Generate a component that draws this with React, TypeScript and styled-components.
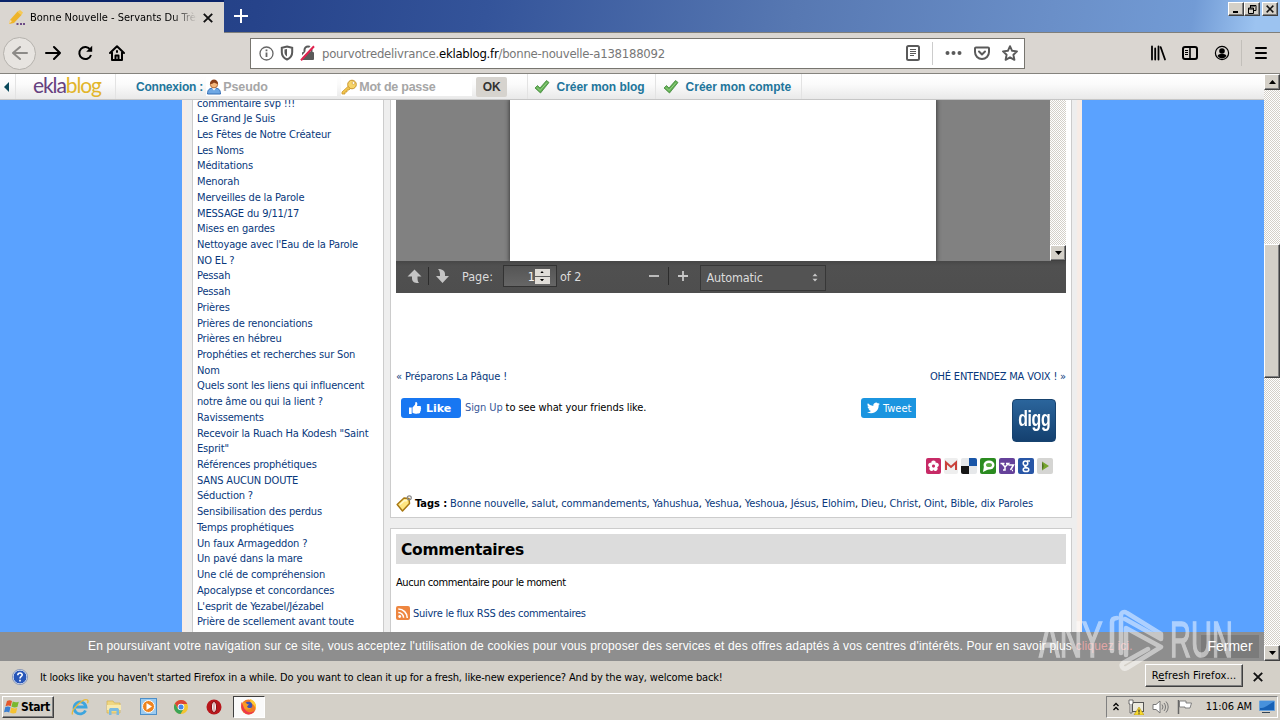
import React from 'react';
import styled, { createGlobalStyle, css } from 'styled-components';

const GlobalStyle = createGlobalStyle`
  * {
    box-sizing: border-box;
  }

  body {
    margin: 0;
    overflow: hidden;
    background: #d4d0c8;
  }
`;

const tahoma = css`
  font-family: 'DejaVu Sans Condensed', 'DejaVu Sans', sans-serif;
  font-stretch: condensed;
`;

const arial = css`
  font-family: 'Liberation Sans', Arial, sans-serif;
`;

const raised = css`
  background: #d4d0c8;
  border: 1px solid;
  border-color: #fff #404040 #404040 #fff;
  box-shadow: inset -1px -1px 0 #808080;
`;

const Screen = styled.div`
  ${tahoma}
  width: 1280px;
  height: 720px;
  display: flex;
  flex-direction: column;
  overflow: hidden;
  font-size: 11px;
  color: #000;
`;

const Text = styled.span<{ $spacing?: number }>`
  white-space: pre;
  letter-spacing: ${({ $spacing }) => $spacing ?? 0}px;
`;

/* ---------- window chrome ---------- */

const TitleBar = styled.div`
  height: 33px;
  flex: none;
  display: flex;
  border-bottom: 1px solid #7f7f7b;
  background: linear-gradient(100deg, #1c3a7c 0%, #26438a 20%, #34549a 38%, #5778b2 62%, #6a8fc8 82%, #729bd5 93%, #9cc3f0 98%);
`;

const Tab = styled.div`
  width: 224px;
  height: 33px;
  border-top: 2px solid #0a246a;
  padding: 0 11px 0 9px;
  display: flex;
  align-items: center;
  background: #dad6d1;
`;

const TabTitle = styled.div`
  width: 167px;
  margin: 0 6px 0 5px;
  overflow: hidden;
  white-space: nowrap;
  mask-image: linear-gradient(90deg, #000 142px, transparent 167px);
`;

const NewTab = styled.div`
  flex: 1;
  padding: 8px 0 0 9px;
`;

const WindowButtons = styled.div`
  display: flex;
  padding: 2px 2px 0 0;
`;

const WindowButton = styled.div<{ $gap?: boolean }>`
  ${raised}
  width: 16px;
  height: 14px;
  margin-left: ${({ $gap }) => ($gap ? 2 : 0)}px;
  display: flex;
  align-items: center;
  justify-content: center;
`;

const NavBar = styled.div`
  height: 41px;
  flex: none;
  display: flex;
  align-items: center;
  padding: 0 13px 0 3px;
  border-bottom: 1px solid #85837e;
  background: #dad6d1;
`;

const BackButton = styled.div`
  width: 33px;
  height: 33px;
  border: 1px solid #b5b2ad;
  border-radius: 50%;
  background: #e7e4e0;
  display: flex;
  align-items: center;
  justify-content: center;
`;

const NavIcons = styled.div`
  display: flex;
  width: 214px;
  padding-left: 9px;
  gap: 16px;
`;

const UrlBar = styled.div`
  width: 775px;
  height: 31px;
  border: 1px solid #77756f;
  background: #fff;
  display: flex;
  align-items: center;
  padding: 0 6px 0 8px;
`;

const UrlText = styled.div`
  flex: 1;
  margin-left: 6px;
  font-size: 13px;
  letter-spacing: -0.25px;
  color: #777;

  b {
    font-weight: normal;
    color: #000;
  }
`;

const Divider = styled.div<{ $h: number; $color: string }>`
  width: 1px;
  height: ${({ $h }) => $h}px;
  background: ${({ $color }) => $color};
`;

const MenuDivider = styled(Divider)`
  margin: 0 -3px 0 -5px;
`;

const UrlActions = styled.div`
  display: flex;
  align-items: center;
  gap: 12px;
`;

const ToolbarRight = styled.div`
  flex: 1;
  display: flex;
  align-items: center;
  justify-content: flex-end;
  gap: 16px;
`;

/* ---------- page ---------- */

const Viewport = styled.div`
  position: relative;
  height: 587px;
  flex: none;
  display: flex;
`;

const Page = styled.div`
  width: 1264px;
  display: flex;
  flex-direction: column;
  background: #5aa2ff;
  overflow: hidden;
`;

const EklaBar = styled.div`
  ${arial}
  height: 26px;
  flex: none;
  display: flex;
  align-items: center;
  font-size: 12px;
  font-weight: bold;
  color: #21759b;
  border-bottom: 1px solid #c6c6c6;
  background: linear-gradient(#fff, #fbfbfb 40%, #e9e9e9);
`;

const EklaCell = styled.div<{ $w: number; $pad?: number }>`
  width: ${({ $w }) => $w}px;
  height: 25px;
  padding-left: ${({ $pad }) => $pad ?? 0}px;
  display: flex;
  align-items: center;
  border-right: 1px solid #e3e3e3;
`;

const Logo = styled.div`
  font-family: Lato, sans-serif;
  font-weight: 400;
  font-size: 21px;
  line-height: 22px;
  letter-spacing: -1.1px;
  margin-top: -3px;
  color: #66407f;

  span {
    color: #e2b52a;
  }
`;

const LoginField = styled.div<{ $w: number }>`
  width: ${({ $w }) => $w}px;
  height: 19px;
  margin-right: 4px;
  display: flex;
  align-items: center;
  gap: 1px;
  font-size: 12.5px;
  color: #a6a6a6;
  background: #fff;
`;

const OkButton = styled.div`
  width: 31px;
  height: 20px;
  border-radius: 2px;
  background: #d6d3ce;
  color: #333;
  font-size: 12px;
  line-height: 21px;
  text-align: center;
`;

const Wrapper = styled.div`
  width: 900px;
  height: 561px;
  margin: 0 auto;
  padding: 0 10px;
  display: flex;
  gap: 6px;
  background: linear-gradient(90deg, #f7ece6 0, #f7ece6 3px, #eeeeee 5px, #eeeeee 894px, #f7ece6 896px);
`;

const Sidebar = styled.div`
  width: 192px;
  padding-left: 4px;
  overflow: hidden;
  background: #fff;
  border: solid #ccc;
  border-width: 0 1px;
`;

const SidebarList = styled.div`
  margin-top: -4.5px;
`;

const SidebarLink = styled.div`
  height: 15.72px;
  line-height: 15.72px;
  white-space: nowrap;
  color: #08387c;
  letter-spacing: -0.16px;
`;

const Column = styled.div`
  width: 682px;
  display: flex;
  flex-direction: column;
  gap: 10px;
`;

const Panel = styled.div<{ $h: number; $first?: boolean }>`
  height: ${({ $h }) => $h}px;
  flex: none;
  padding: ${({ $first }) => ($first ? 0 : 5)}px 5px 0;
  border: 1px solid #ccc;
  border-top-width: ${({ $first }) => ($first ? 0 : 1)}px;
  background: #fff;
`;

const PdfView = styled.div`
  height: 161px;
  display: flex;
  justify-content: flex-end;
  background: #818181;
`;

const PdfSheet = styled.div`
  width: 426px;
  margin-right: 114px;
  background: #fff;
  box-shadow: 0 0 4px 1px rgba(0, 0, 0, 0.5);
  clip-path: inset(0 -6px);
`;

const PdfBar = styled.div`
  height: 32px;
  padding: 0 12px 2px 11px;
  display: flex;
  align-items: center;
  font-size: 12.5px;
  color: #dcdcdc;
  background: linear-gradient(#474747, #505050 5px, #4e4e4e);
`;

const PageInput = styled.div`
  width: 54px;
  height: 22px;
  margin: 0 3px 0 10px;
  padding-right: 6px;
  display: flex;
  align-items: center;
  justify-content: flex-end;
  border: 1px solid #333;
  background: linear-gradient(#555, #666);
  color: #f2f2f2;
`;

const Spinner = styled.div`
  display: flex;
  flex-direction: column;
  gap: 1px;
`;

const SpinnerHalf = styled.div`
  width: 15px;
  height: 7px;
  background: #e0ddd8;
  display: flex;
  align-items: center;
  justify-content: center;
`;

const ZoomSelect = styled.div`
  width: 126px;
  height: 26px;
  margin: 3px 0 0 11px;
  padding: 0 7px 0 6px;
  display: flex;
  align-items: center;
  justify-content: space-between;
  border: 1px solid #373737;
  background: #535353;
`;

const PostNav = styled.div`
  margin-top: 76px;
  height: 15px;
  display: flex;
  justify-content: space-between;
  align-items: center;
  color: #08387c;
`;

const ShareRow = styled.div`
  height: 59px;
  padding: 14px 10px 0 5px;
  display: flex;
  align-items: flex-start;
`;

const LikeButton = styled.div`
  width: 60px;
  height: 20px;
  margin-right: 4px;
  padding-left: 7px;
  border-radius: 3px;
  display: flex;
  align-items: center;
  gap: 4px;
  background: #1877f2;
  color: #fff;
  font-family: 'DejaVu Sans', sans-serif;
  font-stretch: normal;
  font-weight: bold;
`;

const LikeText = styled.div`
  width: 396px;
  line-height: 20px;
  letter-spacing: -0.1px;
  white-space: nowrap;

  span {
    color: #385898;
  }
`;

const TweetButton = styled.div`
  width: 55px;
  height: 20px;
  padding-left: 6px;
  border-radius: 3px 0 0 3px;
  display: flex;
  align-items: center;
  gap: 3px;
  background: #1b95e0;
  color: #fff;
  overflow: hidden;
`;

const Digg = styled.div`
  ${arial}
  width: 44px;
  height: 43px;
  margin: 1px 0 0 96px;
  border-radius: 4px;
  display: flex;
  justify-content: center;
  background: linear-gradient(#2b659c, #14406f);
  border: 1px solid #17436f;
  color: #fff;
  font-size: 22px;
  font-weight: bold;
  line-height: 38px;
`;

const DiggWord = styled.span`
  letter-spacing: -0.5px;
  transform: scaleX(0.72);
`;

const Bookmarks = styled.div`
  height: 16px;
  margin-top: 15px;
  padding-right: 13px;
  display: flex;
  justify-content: flex-end;
  gap: 3px;
`;

const TagRow = styled.div`
  margin-top: 20px;
  height: 18px;
  display: flex;
  align-items: center;
  white-space: nowrap;
`;

const TagLabel = styled.b`
  margin: 0 3px 0 3px;
  letter-spacing: -0.05px;
`;

const Link = styled.span`
  color: #08387c;
`;

const CommentTitle = styled.div`
  height: 30px;
  padding-left: 5px;
  background: #dcdcdc;
  font-family: 'DejaVu Sans', sans-serif;
  font-stretch: normal;
  font-size: 15.5px;
  font-weight: bold;
  line-height: 33px;
  letter-spacing: -0.3px;
`;

const CommentText = styled.div`
  margin: 11px 0 16px;
  height: 15px;
  line-height: 15px;
  letter-spacing: -0.4px;
`;

const RssRow = styled.div`
  display: flex;
  align-items: center;
  gap: 3px;
  letter-spacing: -0.26px;
`;

const CookieBar = styled.div`
  ${arial}
  position: absolute;
  left: 0;
  bottom: 0;
  width: 1264px;
  height: 29px;
  padding: 0 5px 1px 88px;
  display: flex;
  align-items: center;
  justify-content: space-between;
  background: #8e8e8e;
  color: #fff;
  font-size: 12px;

  em {
    font-style: normal;
    color: #e2a6a6;
  }
`;

const CloseCookie = styled.div`
  width: 58px;
  height: 23px;
  background: #7b7b7b;
  font-size: 14px;
  line-height: 23px;
  text-align: center;
`;

const checker = css`
  background: conic-gradient(#fff 25%, #d4d0c8 0 50%, #fff 0 75%, #d4d0c8 0) 0 0 / 2px 2px;
`;

const ScrollTrack = styled.div`
  ${checker}
  width: 16px;
  display: flex;
  flex-direction: column;
`;

const ScrollButton = styled.div`
  ${raised}
  width: 16px;
  height: 16px;
  flex: none;
  display: flex;
  align-items: center;
  justify-content: center;
`;

const ScrollThumb = styled.div`
  ${raised}
  height: 134px;
  margin: 154px 0 auto;
`;

const PdfTrack = styled(ScrollTrack)`
  justify-content: flex-end;
`;

/* ---------- notification and taskbar ---------- */

const Notice = styled.div`
  height: 33px;
  flex: none;
  padding: 0 17px 0 12px;
  display: flex;
  align-items: center;
  background: #d4d0c8;
  border-bottom: 1px solid #fff;
`;

const NoticeText = styled.div`
  flex: 1;
  margin-left: 12px;
  letter-spacing: -0.155px;
`;

const RefreshButton = styled.div`
  ${raised}
  width: 98px;
  height: 23px;
  margin: -3px 10px 0 0;
  line-height: 21px;
  letter-spacing: 0.1px;
  text-align: center;
`;

const Taskbar = styled.div`
  height: 26px;
  padding: 1px 2px 2px;
  display: flex;
  align-items: center;
  background: #d4d0c8;
`;

const StartButton = styled.div`
  ${raised}
  width: 52px;
  height: 22px;
  padding-left: 1px;
  display: flex;
  align-items: center;
  gap: 1px;
  font-weight: bold;
  font-size: 12px;
  letter-spacing: -0.4px;
`;

const QuickLaunch = styled.div`
  flex: 1;
  display: flex;
  align-items: center;
  padding-left: 17px;
  gap: 16.4px;
`;

const ActiveTask = styled.div`
  width: 32px;
  height: 22px;
  margin-left: -5px;
  display: flex;
  align-items: center;
  justify-content: center;
  border: 1px solid;
  border-color: #404040 #fff #fff #404040;
  background: #fafafa;
`;

const Tray = styled.div`
  width: 172px;
  height: 22px;
  padding: 0 2px 0 5px;
  display: flex;
  align-items: center;
  border: 1px solid;
  border-color: #808080 #fff #fff #808080;
`;

const TrayIcons = styled.div`
  flex: 1;
  display: flex;
  align-items: center;
  gap: 8px;
`;

const Watermark = styled.div`
  ${arial}
  position: absolute;
  left: 1039px;
  top: 606px;
  width: 195px;
  height: 68px;
  display: flex;
  align-items: center;
  color: #fff;
  opacity: 0.5;
  font-size: 50px;
  -webkit-text-stroke: 1.5px #fff;
`;

const MarkWord = styled.div<{ $w: number; $scale: number }>`
  width: ${({ $w }) => $w}px;
  line-height: 68px;
  transform: scaleX(${({ $scale }) => $scale});
  transform-origin: left;
  white-space: nowrap;
`;

/* ---------- icons ---------- */

const Arrow = ({ color, flip }: { color: string; flip?: boolean }) => (
  <svg width="16" height="16" viewBox="0 0 16 16" fill="none" stroke={color} strokeWidth="2" strokeLinecap="round" strokeLinejoin="round">
    {flip ? <path d="M15 8H1M8 2L1 8l7 6" /> : <path d="M1 8h14M9 2l6 6-6 6" />}
  </svg>
);

const Cross = ({ size = 10 }: { size?: number }) => (
  <svg width={size} height={size} viewBox="0 0 10 10" stroke="#111" strokeWidth="1.9">
    <path d="M.8.8l8.4 8.4M9.2.8L.8 9.2" />
  </svg>
);

const Triangle = ({ up, size = 7 }: { up?: boolean; size?: number }) => (
  <svg width={size} height={size / 2 + 0.5} viewBox="0 0 7 4">
    <path d={up ? 'M0 4L3.5 0 7 4z' : 'M0 0h7L3.5 4z'} fill="#000" />
  </svg>
);

const Pencil = () => (
  <svg width="16" height="16" viewBox="0 0 16 16">
    <path d="M1 10L8.500 1.500l4 3.500L5 13l-5 1z" fill="#eeb42a" />
    <path d="M8.500 1.500L11 0 14 2.500 12.500 5z" fill="#f5c956" />
    <path d="M0 14l1-4 2 1z" fill="#f4ddb0" />
    <path d="M7.500 13h2v2h-2zM11 13h2v2h-2zM14 13h2v2h-2z" fill="#6d4b86" />
  </svg>
);

const Reload = () => (
  <svg width="16" height="16" viewBox="0 0 16 16" fill="none" stroke="#000" strokeWidth="2">
    <path d="M13.300 4.700A6 6 0 1 0 14 10" />
    <path d="M15.200.8v6H9.200z" fill="#000" stroke="none" />
  </svg>
);

const Home = () => (
  <svg width="16" height="16" viewBox="0 0 16 16" fill="none" stroke="#000" strokeWidth="2" strokeLinejoin="round" strokeLinecap="round">
    <path d="M1 8l7-6.800L15 8M3 7.500V15h10V7.500" />
    <path d="M6.500 15v-4.500h3V15zM8 6v1" />
  </svg>
);

const Info = () => (
  <svg width="15" height="15" viewBox="0 0 15 15" fill="none" stroke="#666">
    <circle cx="7.500" cy="7.500" r="6.500" strokeWidth="1.300" />
    <path d="M7.500 6.500v4.500M7.500 3.500v1.800" strokeWidth="1.800" />
  </svg>
);

const Shield = () => (
  <svg width="14" height="16" viewBox="0 0 14 16">
    <path d="M7 1.500l5.200 1.200v4.500C12.200 11 10 13.200 7 14.500 4 13.200 1.800 11 1.800 7.200V2.700z" fill="none" stroke="#5a5a5a" strokeWidth="2" />
    <path d="M7 4l-2.500.6v2.700c0 2 1 3.400 2.500 4.300z" fill="#5a5a5a" />
  </svg>
);

const BrokenLock = () => (
  <svg width="16" height="16" viewBox="0 0 16 16" fill="none">
    <path d="M4.500 8V5a3.500 3.500 0 0 1 7 0v3" stroke="#5a5a5a" strokeWidth="2" />
    <rect x="2" y="7" width="12" height="8" rx="1" fill="#5a5a5a" />
    <path d="M.5 13.500L12.500 .5" stroke="#fff" strokeWidth="2" />
    <path d="M1 15.200L14 1.200" stroke="#e0224e" strokeWidth="2" />
  </svg>
);

const Reader = () => (
  <svg width="14" height="16" viewBox="0 0 14 16" fill="none" stroke="#5a5a5a">
    <rect x="1" y="1" width="12" height="14" rx="1.500" strokeWidth="2" />
    <path d="M4 4.500h6M4 6.500h6M4 8.500h6M4 10.500h4" />
  </svg>
);

const Dots = () => (
  <svg width="17" height="16" viewBox="0 0 17 16" fill="#5a5a5a">
    <circle cx="2.500" cy="8" r="2" />
    <circle cx="8.500" cy="8" r="2" />
    <circle cx="14.500" cy="8" r="2" />
  </svg>
);

const Pocket = () => (
  <svg width="16" height="15" viewBox="0 0 16 15" fill="none" stroke="#5a5a5a" strokeWidth="2" strokeLinecap="round" strokeLinejoin="round">
    <path d="M2 1.500h12a1 1 0 0 1 1 1V6A7 7 0 0 1 1 6V2.500a1 1 0 0 1 1-1z" />
    <path d="M5 5.500l3 3 3-3" />
  </svg>
);

const Star = () => (
  <svg width="16" height="16" viewBox="0 0 16 16" fill="none" stroke="#5a5a5a" strokeWidth="1.900" strokeLinejoin="round">
    <path d="M8 1.200l2.100 4.600 4.900.6-3.600 3.400 1 5L8 12.300l-4.400 2.500 1-5L1 6.400l4.900-.6z" />
  </svg>
);

const Library = () => (
  <svg width="16" height="16" viewBox="0 0 16 16" stroke="#000" strokeWidth="1.800">
    <path d="M2 1.500v13M5.200 3.500v11M8.500 1.500v13M10.700 2.200l4.300 12.300" strokeLinecap="round" />
  </svg>
);

const SidebarIcon = () => (
  <svg width="16" height="14" viewBox="0 0 16 14" fill="none" stroke="#000">
    <rect x="1" y="1" width="14" height="12" rx="2" strokeWidth="2" />
    <path d="M8 1v12" strokeWidth="1.600" />
    <path d="M3 4.500h3M3 6.500h3M3 8.500h3" />
  </svg>
);

const Account = () => (
  <svg width="16" height="16" viewBox="0 0 16 16">
    <circle cx="8" cy="8" r="6.600" fill="none" stroke="#000" strokeWidth="1.200" />
    <circle cx="8" cy="6" r="2.800" />
    <path d="M3.500 11C4.500 9 6 9 8 9s3.500 0 4.500 2A5.400 5.400 0 0 1 8 13.400 5.400 5.400 0 0 1 3.500 11z" />
  </svg>
);

const Menu = () => (
  <svg width="12" height="14" viewBox="0 0 12 14" stroke="#000" strokeWidth="2" strokeLinecap="round">
    <path d="M1 2h10M1 7h10M1 12h10" />
  </svg>
);

const Check = () => (
  <svg width="16" height="16" viewBox="0 0 16 16">
    <path d="M1 9l2.500-2.500L6 9l6.500-7.500L15 3.500 6.500 14z" fill="#5fae50" stroke="#43883b" strokeWidth=".8" />
    <path d="M3 8.500l3 3 7-8" fill="none" stroke="#9ad38a" />
  </svg>
);

const User = () => (
  <svg width="16" height="16" viewBox="0 0 16 16">
    <path d="M1.500 15c0-4 1.500-6 6.500-6s6.500 2 6.500 6z" fill="#6fa8e4" stroke="#356eb5" />
    <path d="M6 9l2 2.500L10 9z" fill="#fff" />
    <circle cx="8" cy="5.200" r="3.700" fill="#f5b77c" stroke="#a65b25" strokeWidth=".8" />
    <path d="M4 5c0-6 8-6 8 0-2-.3-3-1-4-1.500C7 4.500 5.500 5 4 5z" fill="#8b3f17" />
  </svg>
);

const Key = () => (
  <svg width="17" height="16" viewBox="0 0 17 16">
    <path d="M7.500 7L1 13v2h3v-2h2v-2h2l2-2z" fill="#f3c74f" stroke="#c9942a" strokeWidth=".8" />
    <circle cx="11" cy="5.500" r="4.300" fill="#f7d468" stroke="#c9942a" />
    <circle cx="12.500" cy="4" r="1.400" fill="#fff" stroke="#c9942a" strokeWidth=".6" />
  </svg>
);

const PdfArrow = ({ down }: { down?: boolean }) => (
  <svg width="15" height="15" viewBox="0 0 15 15" fill="#c4c4c4">
    {down ? <path d="M3 0c4 0 7 1.500 7 5v2h4l-6.500 7L1 7h4c0-3 0-5-2-7z" /> : <path d="M7.500.5l7 7h-4c0 3 0 5 1.500 6.500-4 .3-7-1-7-4.500v-2H.5z" />}
  </svg>
);

const SignIcon = ({ plus }: { plus?: boolean }) => (
  <svg width="12" height="12" viewBox="0 0 12 12" stroke="#c8c8c8" strokeWidth="1.800">
    <path d={plus ? 'M1 6h10M6 1v10' : 'M1 6h10'} />
  </svg>
);

const SelectArrows = () => (
  <svg width="6" height="9" viewBox="0 0 6 9" fill="#c8c8c8">
    <path d="M.5 3.200L3 .5l2.500 2.700zM.5 5.800L3 8.500l2.500-2.700z" />
  </svg>
);

const Thumb = () => (
  <svg width="14" height="14" viewBox="0 0 14 14" fill="#fff">
    <path d="M1 6.500h2.700V13H1zM4.500 6.500L7 3.800 7.500 1c1.700-.4 2.300 1.500 1.500 4h3c1 0 1.300 1 .8 1.800.5.700.4 1.500-.1 2 .3.700 0 1.400-.5 1.800.1 1-.4 2-1.600 2-2.800.2-4.300 0-6.100-.9z" />
  </svg>
);

const Bird = () => (
  <svg width="13" height="12" viewBox="0 0 24 20" fill="#fff">
    <path d="M24 2.400a10 10 0 0 1-2.800.8A5 5 0 0 0 23.300.5a10 10 0 0 1-3.100 1.200 4.900 4.900 0 0 0-8.400 4.500A14 14 0 0 1 1.700 1a4.900 4.900 0 0 0 1.500 6.600A5 5 0 0 1 1 7a4.900 4.900 0 0 0 3.900 4.900 5 5 0 0 1-2.200.1 4.900 4.900 0 0 0 4.600 3.400A10 10 0 0 1 0 17.500 14 14 0 0 0 21.500 5z" />
  </svg>
);

const TagIcon = () => (
  <svg width="16" height="17" viewBox="0 0 16 17">
    <path d="M1.200 9.500L8 3l5 .5.500 5L6.500 16z" fill="#ffe680" stroke="#a87812" strokeWidth="1.500" strokeLinejoin="round" />
    <path d="M4 9.500l4.500-4 2.500.2" stroke="#fff8cc" strokeWidth="1.500" fill="none" />
    <circle cx="13.300" cy="2.800" r="2" fill="none" stroke="#888" strokeWidth="1.200" />
  </svg>
);

const Rss = () => (
  <svg width="14" height="14" viewBox="0 0 14 14">
    <rect width="14" height="14" rx="2" fill="#ee8640" />
    <circle cx="3.700" cy="10.500" r="1.400" fill="#fff" />
    <path d="M2.300 6.500a5.300 5.300 0 0 1 5.300 5.300M2.300 3a9 9 0 0 1 9 9" fill="none" stroke="#fff" strokeWidth="1.500" />
  </svg>
);

const Tile = ({ fill, width = 16, children }: { fill: string; width?: number; children: React.ReactNode }) => (
  <svg width={width} height="16" viewBox={`0 0 ${width} 16`}>
    <rect width={width} height="16" rx="2" fill={fill} />
    {children}
  </svg>
);

const BookmarkIcons = () => (
  <Bookmarks>
    <Tile fill="#c72a66" width={15}>
      {[0, 72, 144, 216, 288].map((angle) => (
        <circle key={angle} cx="7.500" cy="4.800" r="2.300" fill="#fff" transform={`rotate(${angle} 7.500 8)`} />
      ))}
      <circle cx="7.500" cy="8" r="1.500" fill="#c72a66" />
    </Tile>
    <Tile fill="#eeeeee" width={14}>
      <path d="M2 12V4.500l5 4.500 5-4.500V12" fill="none" stroke="#c9413a" strokeWidth="2" />
    </Tile>
    <Tile fill="#e6e8ea">
      <path d="M8 0h6a2 2 0 0 1 2 2v6H8z" fill="#1956a8" />
      <path d="M0 8h8v8H2a2 2 0 0 1-2-2z" fill="#161616" />
    </Tile>
    <Tile fill="#2b8b20">
      <ellipse cx="9" cy="7" rx="5.500" ry="4.500" fill="#fff" />
      <path d="M4 8l-1 6 6-3z" fill="#fff" />
      <ellipse cx="9" cy="7" rx="3" ry="2" fill="#5baa42" />
    </Tile>
    <Tile fill="#65419a">
      <path d="M1.500 5.500h4M3 5.500L6 9l3.500-3.500H7M6 9v3H4M9.500 7h5l-3 5M13 12.500h1" fill="none" stroke="#fff" strokeWidth="1.500" />
    </Tile>
    <Tile fill="#2856a6">
      <g fill="none" stroke="#fff" strokeWidth="1.500">
        <circle cx="7.500" cy="5.200" r="2.300" />
        <path d="M9 3h3M8 7.500l-1 1.200 2 1.300" />
        <ellipse cx="8" cy="11.700" rx="2.800" ry="1.900" />
      </g>
    </Tile>
    <Tile fill="#d5d5d3">
      <path d="M5 3.500L12 8l-7 4.500 1.500-4.500z" fill="#75a52c" />
      <path d="M5 3.500v9l2-4.500z" fill="#51751f" />
    </Tile>
  </Bookmarks>
);

const Help = () => (
  <svg width="16" height="16" viewBox="0 0 16 16">
    <circle cx="8" cy="8" r="7" fill="#2856b8" stroke="#eef3ff" strokeWidth="1" />
    <circle cx="8" cy="8" r="7.600" fill="none" stroke="#6a80ac" strokeWidth=".7" />
    <path d="M5.800 6.200c0-3 4.600-2.800 4.400-.2C10 7.500 8 7.500 8 9.500M8 10.800v1.700" fill="none" stroke="#fff" strokeWidth="1.600" />
  </svg>
);

const WindowsFlag = () => (
  <svg width="16" height="16" viewBox="0 0 16 16">
    <path d="M3 2c2-1.200 3.500-1 5 0L6.700 7.200C5 6.200 3.500 6.500 1.500 7.200z" fill="#e4572b" />
    <path d="M8.800 2.500c2 1 3.700 1 6 .2L13.400 8c-2 .8-4 .6-6-.4z" fill="#7ab82e" />
    <path d="M1.300 8c2-.8 3.500-.8 5.200.2L5.200 13.500c-1.500-1-3-1-5.200-.2z" fill="#3b7fd1" />
    <path d="M7.200 8.600c2 1 4 1 6 .3L12 14c-2.200.8-4 .6-6-.4z" fill="#f5c232" />
  </svg>
);

const Explorer = () => (
  <svg width="18" height="18" viewBox="0 0 18 18" fill="none">
    <path d="M14.500 12.500A6 6 0 1 1 15 9H5" stroke="#3da5de" strokeWidth="2.800" />
    <path d="M1.500 16.500C-.5 12 12 0 16.500 2c1 1 .5 2.200 0 3.200" stroke="#e9b93a" strokeWidth="1.300" />
  </svg>
);

const Folder = () => (
  <svg width="18" height="18" viewBox="0 0 18 18">
    <path d="M2 3h6l1.500 2H15v10H2z" fill="#f0d781" stroke="#d2b152" strokeWidth=".7" />
    <path d="M2 7h14v5H2z" fill="#f9eaae" />
    <path d="M4 17v-5c0-1.500 1-2 2-2h6c1 0 2 .5 2 2v5h-2.500v-4h-5v4z" fill="#7cbbe0" />
  </svg>
);

const Player = () => (
  <svg width="17" height="17" viewBox="0 0 17 17">
    <rect x=".5" y=".5" width="16" height="16" fill="#9ccbf0" stroke="#4c8fc9" />
    <circle cx="8.500" cy="8.500" r="6" fill="#ee8420" stroke="#fff" />
    <path d="M6.500 5v7l5.500-3.500z" fill="#fff" />
  </svg>
);

const Chrome = () => (
  <svg width="16" height="16" viewBox="0 0 16 16">
    <circle cx="8" cy="8" r="7" fill="#f4c430" />
    <path d="M1.900 4.500A7 7 0 0 1 14.300 5H8L5 9.700z" fill="#dc4535" />
    <path d="M1.900 4.500A7 7 0 0 0 7.500 15L10.500 10H5z" fill="#3ba457" />
    <circle cx="8" cy="8" r="3.300" fill="#fff" />
    <circle cx="8" cy="8" r="2.500" fill="#4587e8" />
  </svg>
);

const Opera = () => (
  <svg width="16" height="16" viewBox="0 0 16 16">
    <circle cx="8" cy="8" r="7.500" fill="#b8161b" />
    <ellipse cx="8" cy="8" rx="2.600" ry="5.500" fill="#eee" stroke="#850b10" />
    <path d="M8 3v10" stroke="#d68080" />
  </svg>
);

const Firefox = () => (
  <svg width="17" height="17" viewBox="0 0 17 17">
    <circle cx="8.500" cy="9" r="7.500" fill="#f27b24" />
    <path d="M10 1c5 1.500 7 6 5.500 10-.5-4-3-5-5-6z" fill="#ffcb35" />
    <path d="M1.500 4C.5 9 2 14 7 16.300c4 .7 6.500-1 8-4-5 4.500-11 1-11-4z" fill="#ed374c" />
    <circle cx="8.500" cy="7.500" r="3.800" fill="#3b52b5" />
    <path d="M2 5c2-1.500 4-.5 5 1l2 .5-2 2c1 2 4 2 5 .5-.5 3-5.500 4-8 1z" fill="#f99b26" />
  </svg>
);

const Chevrons = () => (
  <svg width="8" height="9" viewBox="0 0 8 9" fill="none" stroke="#000" strokeWidth="1.300">
    <path d="M1.500 4L4 1.500 6.500 4M1.500 8L4 5.500 6.500 8" />
  </svg>
);

const Network = () => (
  <svg width="16" height="16" viewBox="0 0 16 16">
    <rect x="4.500" y="3.500" width="11" height="9" fill="#eceadf" stroke="#555" />
    <path d="M1 1h4v4H4v9H2V5H1z" fill="#fff" stroke="#555" strokeWidth=".8" />
    <path d="M11 8l5 8H6z" fill="#f8da2e" stroke="#b69514" strokeWidth=".6" />
    <path d="M11 10.500v3M11 14.200v1" stroke="#333" strokeWidth="1.200" />
  </svg>
);

const Speaker = () => (
  <svg width="17" height="14" viewBox="0 0 17 14" fill="none" stroke="#777">
    <path d="M1 4.500h3L8 1v12L4 9.500H1z" fill="#fff" />
    <path d="M10 4.500a4 4 0 0 1 0 5M12 3a6 6 0 0 1 0 8M14 1.500a8 8 0 0 1 0 11" />
  </svg>
);

const Flag = () => (
  <svg width="16" height="16" viewBox="0 0 16 16">
    <path d="M1.500 1v14" stroke="#666" strokeWidth="1.500" />
    <path d="M2.500 2H9v2h5.500L13 9H8V8H2.500z" fill="#fff" stroke="#777" strokeWidth=".9" />
  </svg>
);

const Desktop = () => (
  <svg width="16" height="14" viewBox="0 0 16 14">
    <path d="M.5 1h15v9.500H.5z" fill="#1862b6" stroke="#6aa2db" />
    <path d="M1 8c5 0 8-3 14-6.500V1H1z" fill="#4791dc" />
    <path d="M3 12.500h8" stroke="#345" />
  </svg>
);

const WatermarkPlay = () => (
  <svg width="62" height="66" viewBox="0 0 62 66" fill="none" stroke="#fff" strokeWidth="4.500" strokeLinejoin="round" strokeLinecap="round">
    <path d="M4 44V15c0-3 2-4 5-4" />
    <path d="M13 46V9c0-4 3-5 6-3l34 21v5L17 12" />
    <path d="M18 48V21l35 19-34 21c-4 2-7-2-4-5l25-14" />
  </svg>
);

/* ---------- content ---------- */

const categories = [
  'commentaire svp !!!',
  'Le Grand Je Suis',
  'Les Fêtes de Notre Créateur',
  'Les Noms',
  'Méditations',
  'Menorah',
  'Merveilles de la Parole',
  'MESSAGE du 9/11/17',
  'Mises en gardes',
  "Nettoyage avec l'Eau de la Parole",
  'NO EL ?',
  'Pessah',
  'Pessah',
  'Prières',
  'Prières de renonciations',
  'Prières en hébreu',
  'Prophéties et recherches sur Son',
  'Nom',
  'Quels sont les liens qui influencent',
  'notre âme ou qui la lient ?',
  'Ravissements',
  'Recevoir la Ruach Ha Kodesh "Saint',
  'Esprit"',
  'Références prophétiques',
  'SANS AUCUN DOUTE',
  'Séduction ?',
  'Sensibilisation des perdus',
  'Temps prophétiques',
  'Un faux Armageddon ?',
  'Un pavé dans la mare',
  'Une clé de compréhension',
  'Apocalypse et concordances',
  "L'esprit de Yezabel/Jézabel",
  'Prière de scellement avant toute',
];

const tags = [
  'Bonne nouvelle',
  'salut',
  'commandements',
  'Yahushua',
  'Yeshua',
  'Yeshoua',
  'Jésus',
  'Elohim',
  'Dieu',
  'Christ',
  'Oint',
  'Bible',
  'dix Paroles',
];

const BrowserChrome = () => (
  <>
    <TitleBar>
      <Tab>
        <Pencil />
        <TabTitle>Bonne Nouvelle - Servants Du Très</TabTitle>
        <Cross />
      </Tab>
      <NewTab>
        <svg width="16" height="16" viewBox="0 0 16 16" stroke="#fff" strokeWidth="2">
          <path d="M1 8h14M8 1v14" />
        </svg>
      </NewTab>
      <WindowButtons>
        <WindowButton>
          <svg width="10" height="8" viewBox="0 0 10 8">
            <path d="M2 6h5v2H2z" />
          </svg>
        </WindowButton>
        <WindowButton>
          <svg width="10" height="9" viewBox="0 0 10 9" fill="none" stroke="#000">
            <path d="M3 1h5M3.500 0v3M3 .5h6v5H7M1.500 3v5.500h5V3zM1 4h6" />
          </svg>
        </WindowButton>
        <WindowButton $gap>
          <Cross size={8} />
        </WindowButton>
      </WindowButtons>
    </TitleBar>
    <NavBar>
      <BackButton>
        <Arrow color="#8c8a87" flip />
      </BackButton>
      <NavIcons>
        <Arrow color="#000" />
        <Reload />
        <Home />
      </NavIcons>
      <UrlBar>
        <Info />
        <svg width="6" height="1" />
        <Shield />
        <svg width="6" height="1" />
        <BrokenLock />
        <UrlText>
          pourvotredelivrance.<b>eklablog.fr</b>/bonne-nouvelle-a138188092
        </UrlText>
        <UrlActions>
          <Reader />
          <Divider $h={23} $color="#ccc" />
          <Dots />
          <Pocket />
          <Star />
        </UrlActions>
      </UrlBar>
      <ToolbarRight>
        <Library />
        <SidebarIcon />
        <Account />
        <MenuDivider $h={26} $color="#c2bfba" />
        <Menu />
      </ToolbarRight>
    </NavBar>
  </>
);

const BlogBar = () => (
  <EklaBar>
    <EklaCell $w={16} $pad={4}>
      <svg width="5" height="10" viewBox="0 0 5 10">
        <path d="M5 0v10L0 5z" fill="#0b4a5c" />
      </svg>
    </EklaCell>
    <EklaCell $w={100} $pad={17}>
      <Logo>
        ekla<span>blog</span>
      </Logo>
    </EklaCell>
    <EklaCell $w={412} $pad={20}>
      <Text $spacing={-0.2}>Connexion : </Text>
      <LoginField $w={131}>
        <User />
        <Text $spacing={-0.1}>Pseudo</Text>
      </LoginField>
      <LoginField $w={131}>
        <Key />
        <Text $spacing={-0.25}>Mot de passe</Text>
      </LoginField>
      <OkButton>OK</OkButton>
    </EklaCell>
    <EklaCell $w={128} $pad={6}>
      <Check />
      <Text $spacing={-0.05}>{'  '}Créer mon blog</Text>
    </EklaCell>
    <EklaCell $w={146} $pad={7}>
      <Check />
      <Text $spacing={-0.03}>{'  '}Créer mon compte</Text>
    </EklaCell>
  </EklaBar>
);

const PdfReader = () => (
  <>
    <PdfView>
      <PdfSheet />
      <PdfTrack>
        <ScrollButton>
          <Triangle />
        </ScrollButton>
      </PdfTrack>
    </PdfView>
    <PdfBar>
      <PdfArrow />
      <svg width="6" height="1" />
      <Divider $h={18} $color="#2c2c2c" />
      <svg width="6" height="1" />
      <PdfArrow down />
      <svg width="12" height="1" />
      <Text>Page:</Text>
      <PageInput>
        1
        <Spinner>
          <SpinnerHalf>
            <Triangle up size={4} />
          </SpinnerHalf>
          <SpinnerHalf>
            <Triangle size={4} />
          </SpinnerHalf>
        </Spinner>
      </PageInput>
      <Text>of 2</Text>
      <svg width="66" height="1" />
      <SignIcon />
      <svg width="8" height="1" />
      <Divider $h={18} $color="#2c2c2c" />
      <svg width="8" height="1" />
      <SignIcon plus />
      <ZoomSelect>
        <Text $spacing={-0.15}>Automatic</Text>
        <SelectArrows />
      </ZoomSelect>
    </PdfBar>
  </>
);

const Post = () => (
  <Panel $h={418} $first>
    <PdfReader />
    <PostNav>
      <Text $spacing={-0.12}>« Préparons La Pâque !</Text>
      <Text $spacing={-0.19}>OHÉ ENTENDEZ MA VOIX ! »</Text>
    </PostNav>
    <ShareRow>
      <LikeButton>
        <Thumb />
        Like
      </LikeButton>
      <LikeText>
        <span>Sign Up</span> to see what your friends like.
      </LikeText>
      <TweetButton>
        <Bird />
        Tweet
      </TweetButton>
      <Digg>
        <DiggWord>digg</DiggWord>
      </Digg>
    </ShareRow>
    <BookmarkIcons />
    <TagRow>
      <TagIcon />
      <TagLabel>Tags :</TagLabel>
      <Text $spacing={-0.1}>
        {tags.map((tag, i) => (
          <React.Fragment key={tag}>
            {i > 0 && ', '}
            <Link>{tag}</Link>
          </React.Fragment>
        ))}
      </Text>
    </TagRow>
  </Panel>
);

const Comments = () => (
  <Panel $h={140}>
    <CommentTitle>Commentaires</CommentTitle>
    <CommentText>Aucun commentaire pour le moment</CommentText>
    <RssRow>
      <Rss />
      <Link>Suivre le flux RSS des commentaires</Link>
    </RssRow>
  </Panel>
);

const DesktopBar = () => (
  <Taskbar>
    <StartButton>
      <WindowsFlag />
      Start
    </StartButton>
    <QuickLaunch>
      <Explorer />
      <Folder />
      <Player />
      <Chrome />
      <Opera />
      <ActiveTask>
        <Firefox />
      </ActiveTask>
    </QuickLaunch>
    <Tray>
      <TrayIcons>
        <Chevrons />
        <Network />
        <Speaker />
        <Flag />
      </TrayIcons>
      <Text $spacing={-0.1}>11:06 AM</Text>
      <svg width="7" height="1" />
      <Desktop />
    </Tray>
  </Taskbar>
);

export default function App() {
  return (
    <Screen>
      <GlobalStyle />
      <BrowserChrome />
      <Viewport>
        <Page>
          <BlogBar />
          <Wrapper>
            <Sidebar>
              <SidebarList>
                {categories.map((name, i) => (
                  <SidebarLink key={i}>{name}</SidebarLink>
                ))}
              </SidebarList>
            </Sidebar>
            <Column>
              <Post />
              <Comments />
            </Column>
          </Wrapper>
        </Page>
        <ScrollTrack>
          <ScrollButton>
            <Triangle up />
          </ScrollButton>
          <ScrollThumb />
          <ScrollButton>
            <Triangle />
          </ScrollButton>
        </ScrollTrack>
        <CookieBar>
          <Text $spacing={0.152}>
            En poursuivant votre navigation sur ce site, vous acceptez l'utilisation de cookies pour vous proposer des services et des offres adaptés à vos centres d'intérêts. Pour en savoir plus <em>cliquez ici.</em>
          </Text>
          <CloseCookie>Fermer</CloseCookie>
        </CookieBar>
      </Viewport>
      <Notice>
        <Help />
        <NoticeText>
          It looks like you haven't started Firefox in a while. Do you want to clean it up for a fresh, like-new experience? And by the way, welcome back!
        </NoticeText>
        <RefreshButton>
          R<u>e</u>fresh Firefox...
        </RefreshButton>
        <Cross />
      </Notice>
      <DesktopBar />
      <Watermark>
        <MarkWord $w={69} $scale={0.62}>ANY</MarkWord>
        <WatermarkPlay />
        <MarkWord $w={62} $scale={0.58}>RUN</MarkWord>
      </Watermark>
    </Screen>
  );
}
